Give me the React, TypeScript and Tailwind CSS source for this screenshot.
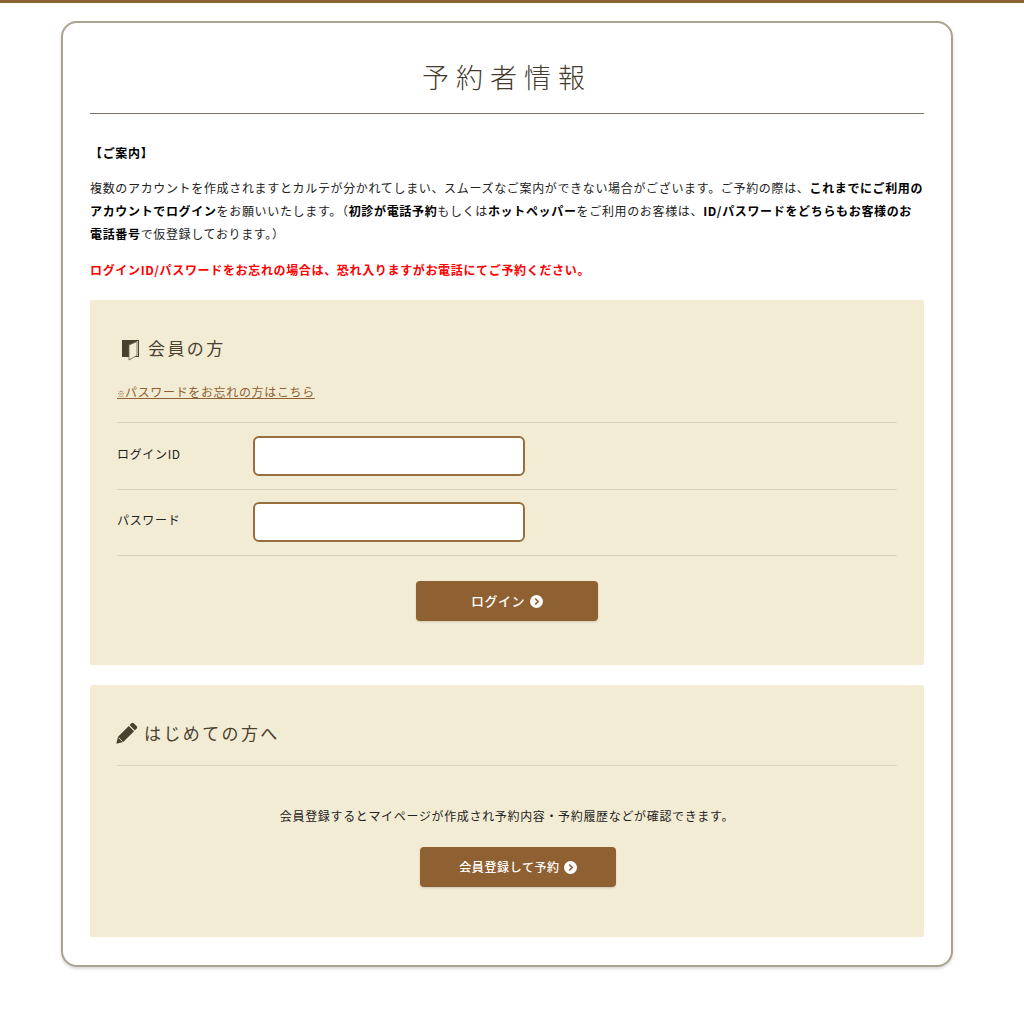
import React from "react";

const font = { fontFamily: '"Noto Sans CJK JP", "Noto Sans", sans-serif' };

function Chevron() {
  return (
    <svg width="13" height="13" viewBox="0 0 14 14" className="shrink-0">
      <circle cx="7" cy="7" r="7" fill="#ffffff" />
      <path d="M5.6 3.8 L8.8 7 L5.6 10.2" fill="none" stroke="#8f6132" strokeWidth="1.8" />
    </svg>
  );
}

function DoorIcon() {
  return (
    <svg width="18" height="21" viewBox="0 0 18 21" className="mt-[5px] shrink-0">
      <rect x="0" y="0" width="17" height="17" fill="#4a4030" />
      <rect x="15" y="1" width="1" height="15" fill="#f3ecd4" />
      <path d="M7 5 L15 1.5 V15.5 L7 20 Z" fill="#f3ecd4" stroke="#6b6250" strokeWidth="0.8" />
    </svg>
  );
}

function PencilIcon() {
  return (
    <svg width="22" height="22" viewBox="0 0 22 22" className="shrink-0">
      <path d="M15.4 1.3 Q16.6 .3 17.8 1.3 L20.7 4.2 Q21.7 5.4 20.7 6.6 L18.9 8.4 L13.6 3.1 Z" fill="#4a4030" />
      <path d="M12.8 3.9 L18.1 9.2 L7.2 20 L.3 21.7 L2 14.7 Z" fill="#4a4030" />
      <path d="M2.5 15.6 L6.4 19.5" stroke="#f3ecd4" strokeWidth="0.9" fill="none" />
    </svg>
  );
}

export default function App() {
  return (
    <div className="min-h-[1011px] bg-white text-[#222222]" style={font}>
      <div className="h-[3px] bg-[#8a652f]" />
      <div className="ml-[61px] mt-[18px] flex h-[946px] w-[892px] flex-col rounded-[16px] border-2 border-[#aaa38f] bg-white px-[27px] shadow-[0_2px_3px_rgba(0,0,0,0.15)]">
        <h1 className="mt-[32px] flex h-[44px] items-center justify-center text-[27px] font-light tracking-[0.26em] text-[#443b2c]">
          予約者情報
        </h1>
        <div className="mt-[14px] h-px bg-[#7b7568]" />

        <p className="mt-[31px] h-[16px] text-[12px] font-bold leading-[16px] tracking-[0.055em] text-black">【ご案内】</p>
        <p className="mt-[15px] text-[12px] leading-[23px] tracking-[0.055em] text-[#222222]">
          複数のアカウントを作成されますとカルテが分かれてしまい、スムーズなご案内ができない場合がございます。ご予約の際は、
          <b className="text-black">これまでにご利用のアカウントでログイン</b>をお願いいたします。（<b className="text-black">初診が電話予約</b>もしくは<b className="text-black">ホットペッパー</b>をご利用のお客様は、<b className="text-black">ID/パスワードをどちらもお客様のお電話番号</b>で仮登録しております。）
        </p>
        <p className="mt-[13px] text-[12px] font-bold leading-[23px] tracking-[0.055em] text-[#ff0000]">
          ログインID/パスワードをお忘れの場合は、恐れ入りますがお電話にてご予約ください。
        </p>

        <section className="mt-[19px] h-[365px] rounded-[2px] bg-[#f3ecd4] px-[27px] pt-[35px]">
          <div className="flex h-[24px] items-center gap-[8px] pl-[5px] pt-[1px]">
            <DoorIcon />
            <h2 className="text-[17px] font-normal tracking-[0.14em] text-[#4a4030]">会員の方</h2>
          </div>
          <a className="mt-[25px] block h-[16px] text-[12px] leading-[16px] tracking-[0.055em] text-[#8f6132] underline">
            <span className="text-[8px] font-bold tracking-normal">※</span>パスワードをお忘れの方はこちら
          </a>
          <div className="mt-[22px] border-t border-[#d9d3bd]">
            <div className="flex h-[67px] items-center border-b border-[#d9d3bd]">
              <label className="w-[136px] pb-[5px] text-[12px] tracking-[0.055em] text-[#222222]">ログインID</label>
              <input className="h-[40px] w-[272px] rounded-[6px] border-2 border-[#966f3f] bg-white" />
            </div>
            <div className="flex h-[66px] items-center border-b border-[#d9d3bd] pb-[1px]">
              <label className="w-[136px] pb-[5px] text-[12px] tracking-[0.055em] text-[#222222]">パスワード</label>
              <input className="h-[40px] w-[272px] rounded-[6px] border-2 border-[#966f3f] bg-white" />
            </div>
          </div>
          <div className="mt-[25px] flex justify-center">
            <button className="flex h-[40px] w-[182px] items-center justify-center gap-[5px] rounded-[4px] bg-[#8f6132] text-[13px] font-medium tracking-[0.04em] text-white shadow-[0_1px_2px_rgba(0,0,0,0.15)]">
              ログイン <Chevron />
            </button>
          </div>
        </section>

        <section className="mt-[20px] h-[252px] rounded-[2px] bg-[#f3ecd4] px-[27px] pt-[34px]">
          <div className="flex h-[28px] items-center gap-[6px]">
            <div className="-ml-[1px] flex">
              <PencilIcon />
            </div>
            <h2 className="text-[17px] font-normal tracking-[0.14em] text-[#4a4030]">はじめての方へ</h2>
          </div>
          <div className="mt-[18px] h-px bg-[#d9d3bd]" />
          <p className="mt-[41px] text-center text-[12px] leading-[18px] tracking-[0.055em] text-[#222222]">
            会員登録するとマイページが作成され予約内容・予約履歴などが確認できます。
          </p>
          <div className="mt-[22px] flex justify-center pl-[22px]">
            <button className="flex h-[40px] w-[196px] items-center justify-center gap-[4px] rounded-[4px] bg-[#8f6132] text-[12px] font-medium tracking-[0.05em] text-white shadow-[0_1px_2px_rgba(0,0,0,0.15)]">
              会員登録して予約 <Chevron />
            </button>
          </div>
        </section>
      </div>
    </div>
  );
}
